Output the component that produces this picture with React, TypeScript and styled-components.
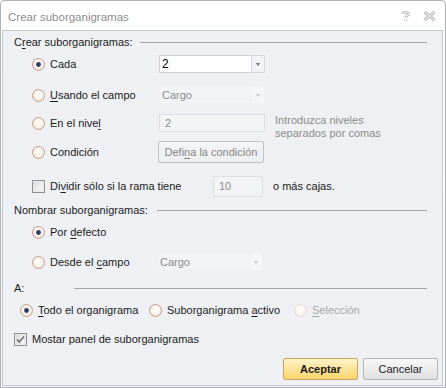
import { useId } from 'react'
import styled, { createGlobalStyle } from 'styled-components'

const GlobalStyle = createGlobalStyle`
  html, body {
    margin: 0;
    padding: 0;
    background: #ffffff;
  }
  body {
    font-family: "Liberation Sans", Arial, sans-serif;
    font-size: 11px;
    color: #1b1b1b;
  }
  u {
    text-underline-offset: 2px;
  }
`

const Window = styled.div`
  width: 446px;
  height: 388px;
  box-sizing: border-box;
  border: 1px solid #aeb1b5;
  border-radius: 4px 4px 0 0;
  background: linear-gradient(#ffffff, #f6f7f8);
  display: flex;
  flex-direction: column;
`
const TitleBar = styled.div`
  height: 29px;
  box-sizing: border-box;
  padding: 3px 0 0 7px;
  display: flex;
  align-items: center;
  font-size: 11.5px;
  color: #8e8e8e;
`
const TitleText = styled.span`
  flex: 1;
`
const TitleIcons = styled.div`
  display: flex;
  align-items: center;
  gap: 13px;
  margin-right: 9px;
  margin-top: -2px;
`
const Panel = styled.div`
  flex: 1;
  margin: 0 2px 1px 1px;
  box-sizing: border-box;
  background: #eef0f3;
  border: 1px solid #c6cacf;
  padding: 0 4px 0 11px;
  display: flex;
  flex-direction: column;
`
const Row = styled.div<{ $mt?: number; $pl?: number }>`
  display: flex;
  align-items: center;
  height: 22px;
  flex: none;
  margin-top: ${(p) => p.$mt ?? 0}px;
  padding-left: ${(p) => p.$pl ?? 0}px;
`
const Header = styled.div<{ $mt?: number; $labelW: number }>`
  display: grid;
  grid-template-columns: ${(p) => p.$labelW}px 1fr;
  align-items: center;
  height: 22px;
  flex: none;
  margin-top: ${(p) => p.$mt ?? 0}px;
  margin-right: 11px;
`
const HeaderLine = styled.div`
  border-top: 1px solid #a4a7aa;
`
const Option = styled.label<{ $w?: number; $disabled?: boolean }>`
  display: flex;
  align-items: center;
  gap: 5px;
  flex: none;
  width: ${(p) => (p.$w ? `${p.$w}px` : 'auto')};
  color: ${(p) => (p.$disabled ? '#a8a8a8' : 'inherit')};
  white-space: nowrap;
`
const Combo = styled.div`
  display: flex;
  width: 106px;
  height: 18px;
  flex: none;
`
const ComboField = styled.div<{ $disabled?: boolean }>`
  flex: 1;
  display: flex;
  align-items: center;
  padding-left: 2px;
  background: ${(p) => (p.$disabled ? '#f2f3f5' : '#ffffff')};
  border: 1px solid ${(p) => (p.$disabled ? '#eff0f2' : '#cdd1d6')};
  border-right: none;
  color: ${(p) => (p.$disabled ? '#8c8c8c' : '#000000')};
  font-size: ${(p) => (p.$disabled ? 11 : 12)}px;
`
const ComboArrow = styled.div<{ $disabled?: boolean }>`
  width: 14px;
  box-sizing: border-box;
  display: flex;
  align-items: center;
  justify-content: center;
  background: ${(p) => (p.$disabled ? '#f5f6f7' : '#f3f4f5')};
  border: 1px solid ${(p) => (p.$disabled ? '#eff0f2' : '#d6d9dd')};
  &::after {
    content: '';
    border-left: 2.5px solid transparent;
    border-right: 2.5px solid transparent;
    border-top: 3px solid ${(p) => (p.$disabled ? '#c8c8c8' : '#6a6a6a')};
  }
`
const TextInput = styled.div<{ $w: number; $h: number; $pad: number }>`
  width: ${(p) => p.$w}px;
  height: ${(p) => p.$h}px;
  box-sizing: border-box;
  flex: none;
  display: flex;
  align-items: center;
  padding-left: ${(p) => p.$pad}px;
  background: #f2f3f5;
  border: 1px solid #dcdfe3;
  color: #8c8c8c;
`
const HelperText = styled.div`
  align-self: flex-start;
  margin: 2px 0 0 10px;
  line-height: 13px;
  color: #8c8c8c;
`
const TrailText = styled.span`
  margin-left: 10px;
`
const GhostButton = styled.div`
  width: 106px;
  height: 22px;
  box-sizing: border-box;
  margin-left: -1px;
  display: flex;
  align-items: center;
  justify-content: center;
  border: 1px solid #bfc1c4;
  border-radius: 2px;
  background: linear-gradient(#f4f5f6, #eceef0);
  color: #858585;
`
const ButtonRow = styled(Row)`
  justify-content: flex-end;
  gap: 5px;
`
const DialogButton = styled.button<{ $primary?: boolean }>`
  width: 75px;
  height: 22px;
  box-sizing: border-box;
  padding: 0;
  font-family: inherit;
  font-size: 11px;
  font-weight: ${(p) => (p.$primary ? 700 : 400)};
  color: #1b1b1b;
  border-radius: 2px;
  border: 1px solid ${(p) => (p.$primary ? '#c9a65e' : '#b4b6b9')};
  background: ${(p) =>
    p.$primary
      ? 'linear-gradient(#fef3c9, #fde39a 50%, #fbd56e)'
      : 'linear-gradient(#f8f8f8, #ececec 50%, #dedede)'};
`

type RadioProps = { checked?: boolean; disabled?: boolean }
const Radio = ({ checked, disabled }: RadioProps) => {
  const id = useId()
  return (
    <svg width="13" height="13" viewBox="0 0 13 13">
      <defs>
        <radialGradient id={id} cx="50%" cy="45%" r="55%">
          <stop offset="0%" stopColor="#ffffff" />
          <stop offset="70%" stopColor={disabled ? '#f8f4f0' : '#f7efe8'} />
          <stop offset="100%" stopColor={disabled ? '#f0e6dd' : '#ecd9c8'} />
        </radialGradient>
      </defs>
      <circle
        cx="6.5"
        cy="6.5"
        r="6"
        fill={`url(#${id})`}
        stroke={disabled ? '#e6d8cc' : '#c2a38d'}
      />
      {checked && <circle cx="6.5" cy="6.5" r="2.4" fill="#2c3d62" />}
    </svg>
  )
}

const Checkbox = ({ checked }: { checked?: boolean }) => {
  const id = useId()
  return (
    <svg width="13" height="13" viewBox="0 0 13 13">
      <defs>
        <linearGradient id={id} x1="0" y1="0" x2="1" y2="1">
          <stop offset="0%" stopColor="#dcdcdc" />
          <stop offset="100%" stopColor="#fbfbfb" />
        </linearGradient>
      </defs>
      <rect x="0.5" y="0.5" width="12" height="12" fill="#f4f4f4" stroke="#8e8f8f" />
      <rect x="2" y="2" width="9" height="9" fill={`url(#${id})`} stroke="#d6d6d6" strokeWidth="0.6" />
      {checked && (
        <path d="M3 6.5 L5.3 9 L10 3.5" fill="none" stroke="#6f6f6f" strokeWidth="1.6" />
      )}
    </svg>
  )
}

const HelpIcon = () => (
  <svg width="9" height="11" viewBox="0 0 9 11">
    <path
      d="M1.5 3 C1.5 0.8 7.5 0.8 7.5 3 C7.5 4.8 4.5 4.8 4.5 6.8 M4.5 8.5 L4.5 10"
      fill="none"
      stroke="#b9b9b9"
      strokeWidth="2.6"
    />
    <path
      d="M1.5 3 C1.5 0.8 7.5 0.8 7.5 3 C7.5 4.8 4.5 4.8 4.5 6.8 M4.5 8.5 L4.5 10"
      fill="none"
      stroke="#ffffff"
      strokeWidth="1"
    />
  </svg>
)

const CloseIcon = () => (
  <svg width="13" height="10" viewBox="0 0 13 10">
    <path d="M1.5 1 L11.5 9 M11.5 1 L1.5 9" stroke="#b9b9b9" strokeWidth="3" />
    <path d="M1.5 1 L11.5 9 M11.5 1 L1.5 9" stroke="#ffffff" strokeWidth="1" />
  </svg>
)

export default function App() {
  return (
    <>
      <GlobalStyle />
      <Window>
        <TitleBar>
          <TitleText>Crear suborganigramas</TitleText>
          <TitleIcons>
            <HelpIcon />
            <CloseIcon />
          </TitleIcons>
        </TitleBar>
        <Panel>
          <Header $labelW={126}>
            <span>
              C<u>r</u>ear suborganigramas:
            </span>
            <HeaderLine />
          </Header>

          <Row $pl={18}>
            <Option $w={127}>
              <Radio checked />
              Cada
            </Option>
            <Combo>
              <ComboField>2</ComboField>
              <ComboArrow />
            </Combo>
          </Row>
          <Row $pl={18} $mt={9}>
            <Option $w={127}>
              <Radio />
              <span>
                <u>U</u>sando el campo
              </span>
            </Option>
            <Combo>
              <ComboField $disabled>Cargo</ComboField>
              <ComboArrow $disabled />
            </Combo>
          </Row>
          <Row $pl={18} $mt={6}>
            <Option $w={127}>
              <Radio />
              <span>
                En el nive<u>l</u>
              </span>
            </Option>
            <TextInput $w={106} $h={18} $pad={5}>
              2
            </TextInput>
            <HelperText>
              Introduzca niveles
              <br />
              separados por comas
            </HelperText>
          </Row>
          <Row $pl={18} $mt={7}>
            <Option $w={127}>
              <Radio />
              Condición
            </Option>
            <GhostButton>
              <span>
                Defi<u>n</u>a la condición
              </span>
            </GhostButton>
          </Row>
          <Row $pl={18} $mt={12}>
            <Option $w={181}>
              <Checkbox />
              <span>
                Di<u>v</u>idir sólo si la rama tiene
              </span>
            </Option>
            <TextInput $w={50} $h={21} $pad={5}>
              10
            </TextInput>
            <TrailText>o más cajas.</TrailText>
          </Row>

          <Header $labelW={143} $mt={2}>
            <span>Nombrar suborganigramas:</span>
            <HeaderLine />
          </Header>
          <Row $pl={18}>
            <Option>
              <Radio checked />
              <span>
                Por <u>d</u>efecto
              </span>
            </Option>
          </Row>
          <Row $pl={18} $mt={8}>
            <Option $w={125}>
              <Radio />
              <span>
                Desde el <u>c</u>ampo
              </span>
            </Option>
            <Combo>
              <ComboField $disabled>Cargo</ComboField>
              <ComboArrow $disabled />
            </Combo>
          </Row>

          <Header $labelW={60} $mt={4}>
            <span>A:</span>
            <HeaderLine />
          </Header>
          <Row $pl={6}>
            <Option $w={129}>
              <Radio checked />
              <span>
                <u>T</u>odo el organigrama
              </span>
            </Option>
            <Option $w={145}>
              <Radio />
              <span>
                Suborganigrama <u>a</u>ctivo
              </span>
            </Option>
            <Option $disabled>
              <Radio disabled />
              <span>
                <u>S</u>elección
              </span>
            </Option>
          </Row>
          <Row $mt={7}>
            <Option>
              <Checkbox checked />
              Mostar panel de suborganigramas
            </Option>
          </Row>

          <ButtonRow $mt={8}>
            <DialogButton $primary>Aceptar</DialogButton>
            <DialogButton>Cancelar</DialogButton>
          </ButtonRow>
        </Panel>
      </Window>
    </>
  )
}
